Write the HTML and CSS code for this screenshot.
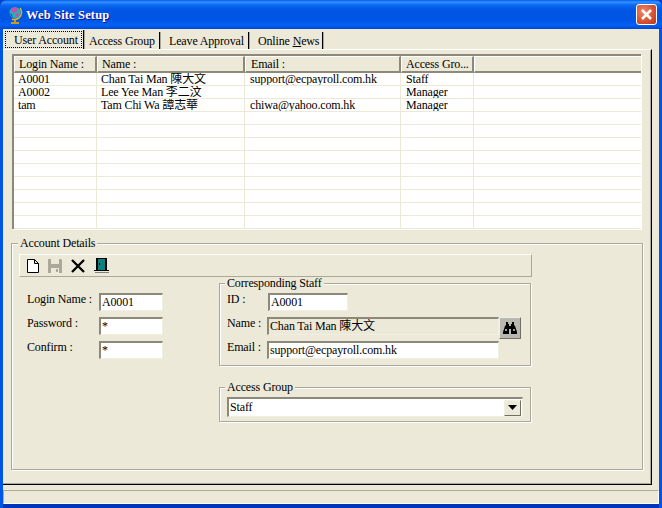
FILE: index.html
```html
<!DOCTYPE html>
<html lang="en">
<head>
<meta charset="utf-8">
<title>Web Site Setup</title>
<link rel="stylesheet" href="styles.css">
</head>
<body>
<div class="window">
  <header class="titlebar">
    <svg class="app-icon" width="16" height="18" viewBox="0 0 16 18"><circle cx="8" cy="6.500" r="5.500" fill="#1fb5b0"/><path d="M4 3l4-2 3 2-2 3-3 1zM8 8l3-1 1 2-3 2z" fill="#d845b0"/><path d="M3 7l2 1 1 3-2-1z" fill="#3a55d0"/><path d="M13 2c2 3 2 7-1 10-2 1-5 2-7 1" fill="none" stroke="#d8b030" stroke-width="1.500"/><path d="M8 14v2M4 17h8" stroke="#c89a20" stroke-width="2" fill="none"/></svg>
    <span class="title-text">Web Site Setup</span>
    <div class="close-btn"><svg width="13" height="13" viewBox="0 0 13 13"><path d="M2 2l9 9M11 2l-9 9" stroke="#fff" stroke-width="2.500" fill="none"/></svg></div>
  </header>
  <main class="client">
    <nav class="tabs">
      <div class="tab tab-active"><span class="focus">User Account</span></div>
      <div class="tab tab-2">Access Group</div>
      <div class="tab tab-3">Leave Approval</div>
      <div class="tab tab-4">Online <u>N</u>ews</div>
    </nav>
    <section class="panel">
      <div class="list">
        <table class="grid">
          <colgroup><col class="c1"><col class="c2"><col class="c3"><col class="c4"><col class="c5"></colgroup>
          <thead><tr><th>Login Name :</th><th>Name :</th><th>Email :</th><th>Access Gro...</th><th></th></tr></thead>
          <tbody>
            <tr><td>A0001</td><td>Chan Tai Man 陳大文</td><td>support@ecpayroll.com.hk</td><td>Staff</td><td></td></tr>
            <tr><td>A0002</td><td>Lee Yee Man 李二汶</td><td></td><td>Manager</td><td></td></tr>
            <tr><td>tam</td><td>Tam Chi Wa 譚志華</td><td>chiwa@yahoo.com.hk</td><td>Manager</td><td></td></tr>
            <tr><td></td><td></td><td></td><td></td><td></td></tr>
            <tr><td></td><td></td><td></td><td></td><td></td></tr>
            <tr><td></td><td></td><td></td><td></td><td></td></tr>
            <tr><td></td><td></td><td></td><td></td><td></td></tr>
            <tr><td></td><td></td><td></td><td></td><td></td></tr>
            <tr><td></td><td></td><td></td><td></td><td></td></tr>
            <tr><td></td><td></td><td></td><td></td><td></td></tr>
            <tr><td></td><td></td><td></td><td></td><td></td></tr>
            <tr><td></td><td></td><td></td><td></td><td></td></tr>
          </tbody>
        </table>
      </div>
      <fieldset class="group details">
        <legend>Account Details</legend>
        <div class="toolbar">
          <svg class="tool" width="14" height="16" viewBox="0 0 14 16"><path d="M1.500 1.500h7l4 4v9h-11zM8.500 1.500v4h4" fill="#fff" stroke="#000"/></svg>
          <svg class="tool" width="16" height="16" viewBox="0 0 16 16"><path d="M1 1h13l1 1v13H1z" fill="#aca899"/><path d="M4 1h8v5H4z" fill="#ece9d8"/><path d="M4 10h8v5H4z" fill="#ece9d8"/><path d="M9 11h2v3H9z" fill="#aca899"/></svg>
          <svg class="tool" width="16" height="16" viewBox="0 0 16 16"><path d="M2 2l12 12M14 2L2 14" stroke="#000" stroke-width="2.300" fill="none"/></svg>
          <svg class="tool" width="17" height="17" viewBox="0 0 17 17"><path d="M3 1h11v12H3z" fill="#000"/><path d="M5 2h7v11H5z" fill="#0a8080"/><path d="M6 6h1v2H6z" fill="#000"/><path d="M1 13h15v1H1z" fill="#000"/><path d="M2 15h14v1H2z" fill="#808080"/></svg>
        </div>
        <div class="form-area">
          <div class="login-form">
            <label class="lbl">Login Name :</label><div class="field f-short">A0001</div>
            <label class="lbl">Password :</label><div class="field f-short">*</div>
            <label class="lbl">Confirm :</label><div class="field f-short">*</div>
          </div>
          <div class="side">
            <fieldset class="group staff">
              <legend>Corresponding Staff</legend>
              <div class="staff-form">
                <label class="lbl">ID :</label><div class="field f-id">A0001</div><span></span>
                <label class="lbl">Name :</label><div class="field f-wide f-off">Chan Tai Man 陳大文</div>
                <div class="find"><svg width="16" height="14" viewBox="0 0 16 14"><path d="M4 1h2v2h1v2h2V3h1V1h2v3l1 1 2 6v2h-6V8H9v0H7v5H1v-2l2-6 1-1z" fill="#000"/><path d="M3 8h2v2H3zM11 8h2v2h-2z" fill="#9aa0a0"/></svg></div>
                <label class="lbl">Email :</label><div class="field f-wide">support@ecpayroll.com.hk</div><span></span>
              </div>
            </fieldset>
            <fieldset class="group access">
              <legend>Access Group</legend>
              <div class="select"><span class="select-text">Staff</span><div class="drop"><svg width="9" height="5" viewBox="0 0 9 5"><path d="M0 0h9L4.500 5z" fill="#000"/></svg></div></div>
            </fieldset>
          </div>
        </div>
      </fieldset>
    </section>
    <footer class="status"></footer>
  </main>
</div>
</body>
</html>
```
FILE: styles.css
```css
* { box-sizing: border-box; }
html, body { margin: 0; padding: 0; }
body { width: 662px; height: 508px; overflow: hidden; background: #0a3ec8; }
.window {
  width: 662px; height: 508px; display: flex; flex-direction: column;
  border-radius: 7px 7px 0 0; overflow: hidden;
  background: #0055e5;
  font: 12px "Liberation Serif", "Noto Sans CJK TC", serif; letter-spacing: -.15px; color: #000;
}
.titlebar {
  height: 29px; flex: none; display: flex; align-items: center; padding: 0 5px 0 7px;
  background: linear-gradient(#0058ee 0, #3593ff 2px, #0a6af0 5px, #0055e5 10px, #0055e5 20px, #0062f5 25px, #0046d5 29px);
}
.app-icon { flex: none; margin-right: 3px; }
.title-text {
  font-weight: bold; font-size: 12.500px; color: #fff; letter-spacing: .15px; text-shadow: 1px 1px 0 #0f1089; padding-top: 2px;
}
.close-btn {
  margin-left: auto; width: 21px; height: 21px; border: 1px solid #fff; border-radius: 3px;
  background: radial-gradient(circle at 35% 35%, #e8896b, #d6502f 60%, #b8381a);
  display: flex; align-items: center; justify-content: center;
}
.client {
  flex: 1; margin: 0 3px 4px; background: #ece9d8; display: flex; flex-direction: column;
  box-shadow: 0 4px 0 #0036b8; min-height: 0;
}
.tabs { height: 20px; flex: none; display: flex; padding-left: 2px; align-items: flex-end; }
.tab { height: 17px; padding: 2px 0 0 4px; border-right: 1px solid #000; white-space: nowrap; line-height: 14px; box-shadow: 1px 0 0 #aca899; }
.tab-active { width: 79px; margin-right: 1px; padding: 1px 0 0; height: 19px; }
.focus { display: block; width: 77px; height: 17px; padding: 1px 0 0 8px; border: 1px dotted #000; line-height: 14px; }
.tab-2 { width: 75px; margin-right: 1px; }
.tab-3 { width: 88px; margin-right: 1px; padding-left: 8px; }
.tab-4 { width: 73px; padding-left: 8px; }
.panel {
  width: 649px; height: 436px; flex: none; border-top: 1px solid #fff; border-right: 1px solid #000; border-bottom: 1px solid #000;
  box-shadow: inset -1px -1px 0 #aca899; padding: 4px 0 0 9px;
}
.list {
  width: 629px; height: 175px; background: #fff; border-top: 2px solid #8c897a; border-left: 2px solid #8c897a;
  box-shadow: 1px 1px 0 #fff;
}
.grid { border-collapse: separate; border-spacing: 0; table-layout: fixed; width: 627px; }
.c1 { width: 83px; } .c2 { width: 148px; } .c3 { width: 156px; } .c4 { width: 73px; } .c5 { width: 167px; }
th {
  height: 17px; padding: 0 0 0 5px; background: #ece9d8; font-weight: normal; text-align: left;
  border-top: 1px solid #fff; border-left: 1px solid #fff; border-right: 2px solid #8c897a; border-bottom: 2px solid #8c897a; line-height: 12px;
  white-space: nowrap; overflow: hidden;
}
th:nth-child(-n+2), th:nth-child(4) { padding-left: 4px; }
th:last-child { border-right: 0; }
td {
  height: 13px; padding: 0 0 0 4px; border-right: 1px solid #ece9d8; border-bottom: 1px solid #ece9d8; line-height: 12px; white-space: nowrap; overflow: hidden;
}
td:nth-child(n+3) { padding-left: 5px; }
td:last-child { border-right: 0; }
.group { margin: 0; min-width: 0; padding: 0; border: 1px solid #aca899; box-shadow: 1px 1px 0 #fff, inset 1px 1px 0 #fff; }
.group legend { height: 12px; line-height: 12px; padding: 0 2px; margin-left: -1px; background: #ece9d8; }
.details { margin: 8px 0 0 -1px; width: 632px; height: 233px; padding: 5px 0 0 7px; }
.toolbar {
  width: 513px; height: 23px; display: flex; align-items: center; padding-left: 6px; gap: 7px;
  border-top: 1px solid #fff; border-bottom: 1px solid #aca899; border-left: 1px solid #fff; border-right: 1px solid #aca899;
}
.tool { flex: none; }
.form-area { display: flex; }
.login-form { width: 200px; padding: 16px 0 0 8px; display: grid; grid-template-columns: 72px 64px; grid-auto-rows: 24px; }
.lbl { line-height: 12px; }
.field {
  height: 18px; background: #fff; border: 1px solid #808080; border-width: 2px 1px 1px 2px; border-color: #8c897a #f1efe2 #f1efe2 #8c897a;
  padding-left: 1px; line-height: 15px; white-space: nowrap;
}
.side { width: 313px; }
.staff { width: 312px; height: 89px; padding: 4px 0 0 7px; }
.staff legend { margin-left: -2px; }
.staff-form { display: grid; grid-template-columns: 40px 232px 22px; grid-auto-rows: 24px; }
.f-id { width: 80px; margin-left: 1px; }
.f-off { background: #ece9d8; }
.find {
  width: 22px; height: 22px; background: #b8b8b0; border: 1px solid; border-color: #f1efe2 #716f64 #716f64 #f1efe2;
  display: flex; align-items: center; justify-content: center;
}
.access { width: 312px; margin-top: 15px; padding: 4px 0 0 7px; height: 41px; }
.access legend { margin-left: -2px; }
.select {
  width: 296px; height: 20px; background: #fff; border: 1px solid; border-width: 2px 1px 1px 2px; border-color: #8c897a #f1efe2 #f1efe2 #8c897a;
  display: flex; align-items: center; justify-content: space-between;
}
.select-text { padding-left: 1px; }
.drop {
  width: 17px; height: 16px; background: #ece9d8; border: 1px solid; border-color: #f1efe2 #716f64 #716f64 #f1efe2; margin-right: 1px;
  display: flex; align-items: center; justify-content: center;
}
.status { margin-top: 5px; flex: 1; border-top: 1px solid #aca899; border-left: 1px solid #aca899; border-right: 1px solid #fff; border-bottom: 1px solid #fff; }
```
